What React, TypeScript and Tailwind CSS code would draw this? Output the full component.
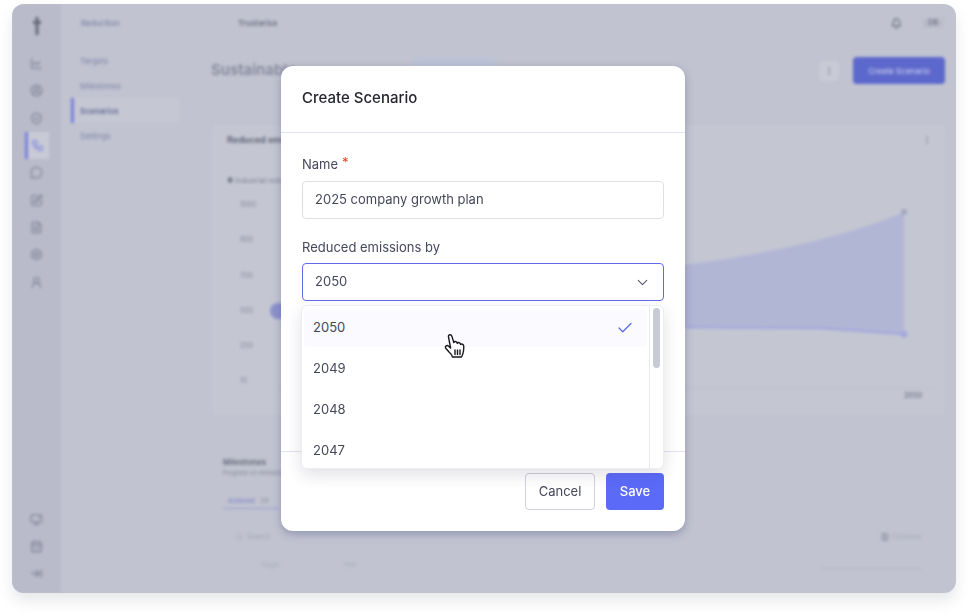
import {
  ArrowRightToLine,
  Bell,
  CalendarDays,
  ChartLine,
  Check,
  ChevronDown,
  CircleUserRound,
  Columns3,
  EllipsisVertical,
  FileText,
  MessageCircle,
  MonitorDot,
  Search,
  Settings,
  ShieldCheck,
  SquarePen,
  UserRound,
  Workflow,
} from "lucide-react";

const railIcons = [
  { icon: ChartLine },
  { icon: CircleUserRound },
  { icon: ShieldCheck },
  { icon: Workflow, active: true },
  { icon: MessageCircle },
  { icon: SquarePen },
  { icon: FileText },
  { icon: Settings },
  { icon: UserRound },
];

const railBottom = [MonitorDot, CalendarDays, ArrowRightToLine];
const navItems = ["Targets", "Milestones", "Scenarios", "Settings"];
const yLabels = ["1000", "800", "700", "500", "250", "10"];
const years = ["2050", "2049", "2048", "2047"];

function Rail() {
  return (
    <aside className="flex h-full w-[49px] shrink-0 flex-col items-center bg-[#b9bbca] pb-[6px] pt-[13px]">
      <svg viewBox="0 0 8 18" className="h-[18px] w-[8px]" fill="#666979">
        <path d="M2.5 0h3v4H8v3H5.5v11h-3V7H0V4h2.5z" />
      </svg>
      <div className="mt-[15px] flex w-full flex-col">
        {railIcons.map(({ icon: Icon, active }, i) => (
          <div
            key={i}
            className={
              active
                ? "ml-[13px] flex h-[27.3px] w-[24px] items-center justify-center border-l-[3px] border-[#7a80dc] bg-[#c8cad6] pr-[3px]"
                : "flex h-[27.3px] items-center justify-center"
            }
          >
            <Icon
              size={13}
              strokeWidth={active ? 2 : 2.4}
              className={active ? "text-[#7a80dc]" : "text-[#85889b]"}
            />
          </div>
        ))}
      </div>
      <div className="mt-auto flex flex-col">
        {railBottom.map((Icon, i) => (
          <div key={i} className="flex h-[27px] items-center justify-center">
            <Icon size={13} strokeWidth={2.4} className="text-[#85889b]" />
          </div>
        ))}
      </div>
    </aside>
  );
}

function SubNav() {
  return (
    <nav className="h-full w-[134px] shrink-0 pl-[10px] pt-[13px] text-[8px] text-[#8085a8]">
      <div className="pl-[10px] font-medium">Reduction</div>
      <ul className="mt-[19px] flex w-[109px] flex-col">
        {navItems.map((item) => (
          <li
            key={item}
            className={
              item === "Scenarios"
                ? "flex h-[25px] items-center border-l-[3px] border-[#7a80dc] bg-[#c5c7d3] pl-[6px] font-semibold text-[#666a95]"
                : "flex h-[25px] items-center pl-[9px]"
            }
          >
            {item}
          </li>
        ))}
      </ul>
    </nav>
  );
}

function EmissionsChart() {
  return (
    <div className="relative mt-[6px] flex h-[200px] pl-[8px]">
      <div className="flex w-[36px] flex-col justify-between pb-[5px] pl-[20px] pt-[8px] text-left text-[7px] text-[#858898]">
        {yLabels.map((label) => (
          <span key={label}>{label}</span>
        ))}
      </div>
      <svg viewBox="0 0 680 200" className="h-[200px] w-[680px]">
        <path
          d="M21 112 L21 128 L429 135 L564 136 L648 142 L648 20 C590 45 510 62 429 73 L21 112 Z"
          fill="#b2b6d5"
        />
        <path d="M429 135 L564 136 L648 142" stroke="#a5a9dc" strokeWidth="2.5" fill="none" />
        <circle cx="22" cy="119" r="8" fill="#8c92cc" />
        <circle cx="648" cy="142" r="3.5" fill="#a5a9dc" />
        <circle cx="648" cy="20" r="3" fill="#a3a6bd" />
        <path d="M21 196 H680" stroke="#bcbecb" strokeWidth="1" />
      </svg>
      <span className="absolute bottom-[-9px] right-[23px] text-[7px] font-semibold text-[#777a8c]">2050</span>
    </div>
  );
}

function MainPanel() {
  return (
    <main className="flex h-full min-w-0 flex-1 flex-col pl-[16px] pr-[11px]">
      <header className="flex h-[38px] shrink-0 items-center pl-[27px]">
        <span className="text-[8px] font-semibold text-[#6f7284]">Trustarisa</span>
        <Bell size={11} strokeWidth={2.6} className="ml-auto mr-[21px] text-[#6f7284]" />
        <span className="mr-[2px] rounded bg-[#b8bac8] px-[5px] text-[7px] font-semibold text-[#6f7284]">DB</span>
      </header>
      <div className="mt-[15px] flex h-[27px] shrink-0 items-center">
        <h1 className="text-[15px] font-semibold text-[#85889a]">Sustainable</h1>
        <span className="ml-[116px] h-[18px] w-[86px] self-start rounded-full bg-[#bcc3d6]" />
        <span className="ml-auto mr-[14px] flex h-[20px] w-[20px] items-center justify-center rounded bg-[#c8cad5]">
          <EllipsisVertical size={10} className="text-[#777a8c]" />
        </span>
        <button className="h-[27px] w-[92px] rounded bg-[#5c68cb] text-[8px] font-medium text-[#c0c4ea]">
          Create Scenario
        </button>
      </div>
      <section className="ml-px mt-[41px] h-[290px] shrink-0 rounded bg-[#c4c6d2] pt-[8px]">
        <div className="flex items-center justify-between px-[15px]">
          <h2 className="text-[9px] font-bold text-[#686b7c]">Reduced emissions</h2>
          <EllipsisVertical size={10} className="mr-[-2px] text-[#85889a]" />
        </div>
        <div className="mt-[29px] px-[15px] text-[7px] text-[#7c7f90]">● Industrial reductions</div>
        <EmissionsChart />
      </section>
      <section className="ml-[12px] mt-[41px] flex-1 text-[#6d7080]">
        <h2 className="text-[8px] font-bold">Milestones</h2>
        <p className="text-[6px] text-[#85889b]">Progress on emission goals</p>
        <div className="mt-[19px] flex w-[56px] gap-[6px] border-b border-[#9a9fd5] pb-[3px] pl-[5px] text-[6px] font-medium text-[#7d82cc]">
          Achieved <span className="text-[#85889b]">23</span>
        </div>
        <div className="mt-[23px] flex items-center pr-[24px] text-[7px] text-[#a4a7b6]">
          <Search size={8} className="ml-[12px] mr-[4px]" />
          <span>Search</span>
          <Columns3 size={8} className="ml-auto mr-[3px] text-[#7a7d8e]" />
          <span>Columns</span>
        </div>
        <div className="mt-[17px] flex justify-between pl-[38px] pr-[24px] text-[6px] text-[#a8abb9]">
          <span>Target</span>
          <span className="mr-[400px]">Year</span>
          <span className="w-[100px] border-b border-[#b3b5c3]" />
        </div>
      </section>
    </main>
  );
}

function HandCursor() {
  return (
    <svg
      viewBox="0 0 22 26"
      className="absolute left-[163px] top-[267px] z-20 h-[26px] w-[22px]"
      fill="#fff"
      stroke="#16161c"
      strokeWidth="1.4"
      strokeLinejoin="round"
      strokeLinecap="round"
    >
      <path d="M6 12 L4.5 3.8 Q4.2 1.8 6 1.8 Q7.5 1.8 8 3.6 L9.8 9.5 Q10.5 8.2 12 8.6 Q13 9 13.3 10.3 Q14.2 9.2 15.6 9.8 Q16.5 10.3 16.6 11.4 Q17.6 10.6 18.8 11.4 Q19.8 12.2 19.8 14 L19.5 18 Q19.2 21 17.5 24 L8.5 24 Q7.5 21 5 19 L2 15.5 Q0.8 14 2 13 Q3.2 12 4.6 13.2 L6.6 15 Z" />
      <path d="M11 17 V21.5 M13.5 17 V21.5 M16 17 V21.5" fill="none" />
    </svg>
  );
}

function YearDropdown() {
  return (
    <div className="absolute left-[20px] top-[239px] z-10 flex h-[164px] w-[363px] overflow-hidden rounded-md border border-[#eceef3] bg-white shadow-[0_6px_16px_rgba(40,44,70,0.14)]">
      <ul className="flex-1 px-[2px] pt-[3px]">
        {years.map((year, i) => (
          <li
            key={year}
            className={
              i === 0
                ? "mb-[3px] flex h-[38px] items-center justify-between rounded bg-[#fafaff] pl-[9px] pr-[13px]"
                : "mb-[3px] flex h-[38px] items-center pl-[9px]"
            }
          >
            <span>{year}</span>
            {i === 0 && <Check size={18} strokeWidth={1.6} className="text-[#5468e0]" />}
          </li>
        ))}
      </ul>
      <div className="w-[14px] shrink-0 border-l border-[#e8e9ef] px-[3px] pt-[2px]">
        <div className="h-[60px] w-[7px] rounded-full bg-[#c8cbd6]" />
      </div>
    </div>
  );
}

function CreateScenarioModal() {
  return (
    <div className="absolute left-[269px] top-[62px] z-10 flex h-[465px] w-[404px] flex-col rounded-xl bg-white text-[13px] text-[#45475a] shadow-[0_3px_8px_rgba(60,70,120,0.35)]">
      <div className="flex h-[67px] shrink-0 items-center border-b border-[#e2e3ea] px-[21px] pb-[2px] text-[15px] font-medium text-[#24252f]">
        Create Scenario
      </div>
      <div className="flex-1 px-[21px] pt-[23px]">
        <label className="flex h-[18px] items-center">
          Name <span className="mb-[4px] ml-[4px] text-[#e5472b]">*</span>
        </label>
        <div className="mt-[7px] flex h-[38px] items-center rounded border border-[#dddfe7] px-[12px]">
          2025 company growth plan
        </div>
        <label className="mt-[20px] flex h-[18px] items-center">Reduced emissions by</label>
        <div className="mt-[6px] flex h-[38px] items-center justify-between rounded border border-[#5f6ce8] px-[12px]">
          2050
          <ChevronDown size={17} strokeWidth={1.6} className="text-[#54566e]" />
        </div>
      </div>
      <div className="flex h-[80px] shrink-0 justify-end gap-[11px] border-t border-[#e2e3ea] px-[21px] pt-[21px]">
        <button className="h-[37px] w-[70px] rounded border border-[#cfd1db] bg-white">Cancel</button>
        <button className="h-[37px] w-[58px] rounded bg-[#5b6bf8] font-medium text-white">Save</button>
      </div>
      <YearDropdown />
      <HandCursor />
    </div>
  );
}

export default function App() {
  return (
    <div className="h-[612px] w-[967px] overflow-hidden bg-white pl-[12px] pt-[4px] font-['Inter',sans-serif]">
      <div className="relative h-[589px] w-[944px] rounded-xl bg-[#c1c3d0] shadow-[0_8px_14px_rgba(60,64,90,0.12)]">
        <div className="flex h-full overflow-hidden rounded-xl">
          <div className="flex h-full w-full blur-[1.5px]">
            <Rail />
            <SubNav />
            <MainPanel />
          </div>
        </div>
        <CreateScenarioModal />
      </div>
    </div>
  );
}
